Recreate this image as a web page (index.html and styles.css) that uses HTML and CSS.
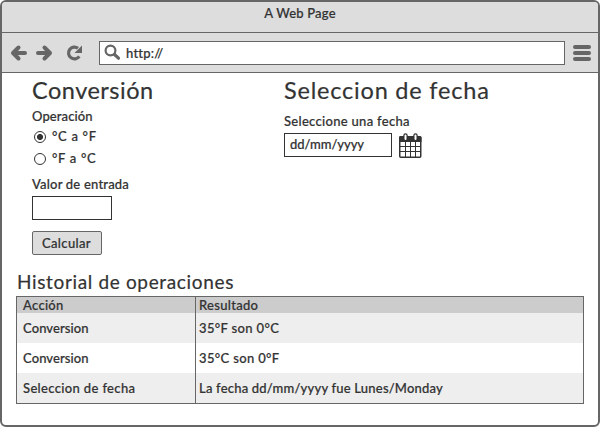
FILE: index.html
```html
<!DOCTYPE html>
<html lang="es">
<head>
<meta charset="utf-8">
<title>A Web Page</title>
<link rel="stylesheet" href="styles.css">
</head>
<body>
<div class="window">
  <header class="titlebar"><span class="t-page">A Web Page</span></header>
  <nav class="toolbar">
    <svg class="nav-icons" width="76" height="18" viewBox="0 0 76 18" fill="none" stroke="#666" stroke-width="4" stroke-linecap="round" stroke-linejoin="round">
      <path d="M8.500 3.500 3 9l5.500 5.500M4 9h11M34.500 3.500 40 9l-5.500 5.500M39 9H28"/>
      <path d="M69.300 12.400A5.900 5.900 0 1 1 68 4.300" stroke-width="3.200" stroke-linecap="butt"/>
      <path d="M72 1.500V9H64.500Z" fill="#666" stroke="none"/>
    </svg>
    <div class="address">
      <svg width="18" height="18" viewBox="0 0 18 18" fill="none" stroke="#666" stroke-linecap="round">
        <circle cx="6.500" cy="6.500" r="4.900" stroke-width="2.200"/><path d="m10.500 10.500 4 3.700" stroke-width="3.200"/>
      </svg>
      <span class="t-url">http://</span>
    </div>
    <div class="menu"><i></i><i></i><i></i></div>
  </nav>
  <main>
    <div class="forms">
      <section class="conversion">
        <h1 class="t-conv">Conversión</h1>
        <div class="label t-oper">Operación</div>
        <div class="option"><span class="radio checked"></span><span class="t-opt">°C a °F</span></div>
        <div class="option"><span class="radio"></span><span class="t-opt">°F a °C</span></div>
        <div class="label value t-value">Valor de entrada</div>
        <div class="field"></div>
        <div class="button"><span class="t-calc">Calcular</span></div>
      </section>
      <section class="date">
        <h1 class="t-date">Seleccion de fecha</h1>
        <div class="label pick t-pick">Seleccione una fecha</div>
        <div class="date-row">
          <div class="field date-field"><span class="t-format">dd/mm/yyyy</span></div>
          <svg width="23" height="25" viewBox="0 0 23 25">
            <rect x=".75" y="3.750" width="21" height="20.500" rx="1" fill="#fff" stroke="#333" stroke-width="1.500"/>
            <path d="M0 4.500Q0 3 1.500 3h19.500q1.500 0 1.500 1.500V9H0Z" fill="#333"/>
            <path d="M6.500 9v15M11.500 9v15M16.500 9v15M1 13.500h21M1 18.500h21" stroke="#333"/>
            <path d="M6.500 2.500v3.500M16.500 2.500v3.500" stroke="#333" stroke-width="4.500" stroke-linecap="round"/>
            <path d="M6.500 2.500v3.500M16.500 2.500v3.500" stroke="#fff" stroke-width="2" stroke-linecap="round"/>
          </svg>
        </div>
      </section>
    </div>
    <h2 class="t-history">Historial de operaciones</h2>
    <div class="table">
      <div class="row head"><span class="t-action">Acción</span><span class="t-result">Resultado</span></div>
      <div class="row odd"><span class="t-item">Conversion</span><span class="t-deg">35°F son 0°C</span></div>
      <div class="row"><span class="t-item">Conversion</span><span class="t-deg">35°C son 0°F</span></div>
      <div class="row odd"><span class="t-sel">Seleccion de fecha</span><span class="t-long">La fecha dd/mm/yyyy fue Lunes/Monday</span></div>
    </div>
  </main>
</div>
</body>
</html>
```
FILE: styles.css
```css
* { box-sizing: border-box; }
body { margin: 0; background: #fff; color: #333; font: 500 13px/16px Lato, sans-serif; -webkit-text-stroke: .2px #333; }
h1, h2 { margin: 0; font-weight: 400; white-space: nowrap; }
h1 { font-size: 23.500px; line-height: 26px; }
h2 { font-size: 19px; line-height: 24px; }
svg { display: block; flex: none; }
span, .label { white-space: nowrap; }
.window { width: 600px; height: 427px; border: 2px solid #666; border-radius: 6px; overflow: hidden; }
.titlebar { height: 31px; padding-top: 3px; background: #ddd; border-bottom: 1px solid #666; text-align: center; }
.toolbar { height: 40px; display: flex; align-items: center; background: #ddd; border-bottom: 1px solid #666; padding-left: 8px; }
.address { width: 466px; height: 24px; margin-left: 13px; padding-left: 4px; display: flex; align-items: center; gap: 4px; background: #fff; border: 1px solid #666; }
.menu { margin-left: 8px; display: grid; gap: 2px; }
.menu i { width: 18px; height: 4px; border-radius: 2px; background: #666; }
.forms { display: grid; grid-template-columns: 252px 1fr; height: 197px; padding: 4px 0 0 30px; }
.label { height: 16px; }
.conversion .t-oper { margin: 5px 0 2px; }
.option { height: 22px; display: flex; align-items: center; gap: 6px; padding-left: 2px; }
.radio { width: 12px; height: 12px; border: 1.500px solid #333; border-radius: 50%; }
.radio.checked { background: radial-gradient(circle, #333 0 2.700px, transparent 3.300px); }
.t-opt { margin-top: -2px; }
.value { margin-top: 6px; }
.field { width: 80px; height: 24px; margin-top: 4px; border: 1px solid #333; }
.button { width: 70px; height: 24px; margin-top: 11px; padding: 3px 0 0 9px; background: #ddd; border: 1px solid #666; border-radius: 2px; }
.pick { margin-top: 10px; }
.date-row { display: flex; gap: 7px; margin-top: 4px; }
.date-field { width: 108px; margin: 0; padding: 2px 0 0 5px; }
h2 { margin-left: 15px; }
.table { width: 568px; margin: 2px 0 0 14px; border: 1px solid #666; }
.row { display: grid; grid-template-columns: 178px 1fr; height: 30px; line-height: 30px; }
.row span { padding-left: 6px; }
.row span + span { padding-left: 3px; border-left: 1px solid #666; }
.head { height: 16px; line-height: 17px; background: #ccc; }
.odd { background: #eee; }
.t-page, .t-url, .t-value, .t-long { letter-spacing: .2px; }
.t-oper, .t-item { letter-spacing: .1px; }
.t-deg, .t-calc, .t-sel { letter-spacing: .35px; }
.t-opt { letter-spacing: .7px; }
.t-pick, .t-action, .t-result { letter-spacing: .3px; }
.t-format { letter-spacing: -.05px; }
.t-conv { letter-spacing: .5px; }
.t-date { letter-spacing: .8px; }
.t-history { letter-spacing: .65px; }
```
